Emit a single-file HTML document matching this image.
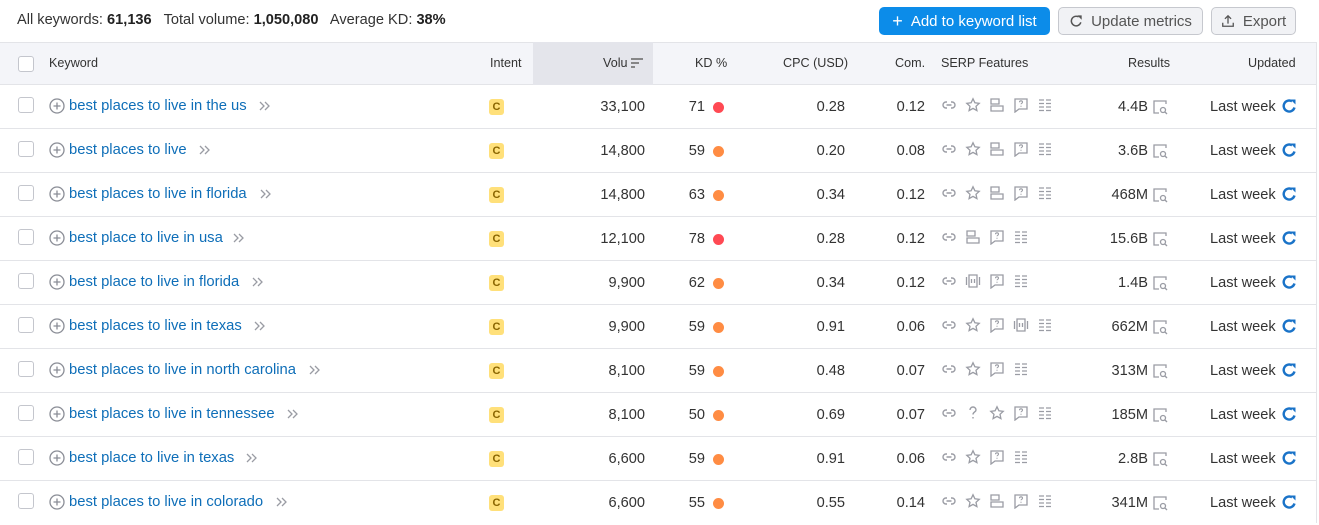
<!DOCTYPE html><html><head><meta charset="utf-8"><style>
*{margin:0;padding:0;box-sizing:border-box}
body{width:1319px;height:523px;overflow:hidden;background:#fff;font-family:"Liberation Sans",Arial,sans-serif;color:#333;font-size:14.6px;position:relative}
.abs{position:absolute}
.top{left:17px;top:12px;font-size:14.6px;color:#333}
.top b{color:#222}
.btn{position:absolute;top:7px;height:28px;border-radius:5px;font-size:15px;display:flex;align-items:center;justify-content:center;gap:8px}
.hdr{position:absolute;left:0;top:42px;width:1317px;height:43px;background:#f4f5f9;border-top:1px solid #e3e4e8;border-bottom:1px solid #e3e4e8}
.vol{position:absolute;left:533px;top:42px;width:120px;height:43px;background:#e4e5eb}
.h{position:absolute;top:56px;font-size:12.6px;color:#333}
.row{position:absolute;left:0;width:1317px;height:44px;border-bottom:1px solid #e3e4e8}
.row span,.row svg{position:absolute}
.cb{left:18px;top:12px;width:16px;height:16px;border:1px solid #c4c6cd;border-radius:3px;background:#fff}
.kw{left:69px;top:13px;color:#0e6eb8;font-size:14.8px;white-space:nowrap}
.ci{left:489px;top:14px;width:15px;height:16px;background:#ffe07a;border-radius:3px;font-size:11px;font-weight:bold;color:#8a6500;text-align:center;line-height:16px}
.r{text-align:right;top:14px}
.dot{width:11px;height:11px;border-radius:50%;top:17px;left:713px}
.lw{left:1210px;top:14px;color:#333}
</style></head><body>
<svg width="0" height="0" style="position:absolute"><defs>
<symbol id="plus" viewBox="0 0 16 16"><circle cx="8" cy="8" r="7" fill="none" stroke="#8a8d96" stroke-width="1.3"/><path d="M8 4.5v7M4.5 8h7" stroke="#8a8d96" stroke-width="1.3"/></symbol>
<symbol id="chev" viewBox="0 0 14 14"><path d="M2 3l4 4-4 4M7 3l4 4-4 4" fill="none" stroke="#9a9ca4" stroke-width="1.3"/></symbol>
<symbol id="link" viewBox="0 0 16 16"><path d="M6 5H5a3 3 0 000 6h1M10 5h1a3 3 0 010 6h-1M5.5 8h5" fill="none" stroke="#9a9ca4" stroke-width="1.4"/></symbol>
<symbol id="star" viewBox="0 0 16 16"><path d="M8 1.8l1.9 4 4.3.5-3.2 3 .9 4.3L8 11.4l-3.9 2.2.9-4.3-3.2-3 4.3-.5z" fill="none" stroke="#9a9ca4" stroke-width="1.3"/></symbol>
<symbol id="site" viewBox="0 0 16 16"><path d="M2 2h8v5H2zM2 9h12v5H2z" fill="none" stroke="#9a9ca4" stroke-width="1.3"/></symbol>
<symbol id="faq" viewBox="0 0 16 16"><path d="M2 2h12v10H6l-4 3z" fill="none" stroke="#9a9ca4" stroke-width="1.3"/><path d="M6.5 5.3a1.5 1.5 0 113 0c0 1-1.5 1-1.5 2M8 8.8v1" fill="none" stroke="#9a9ca4" stroke-width="1.1"/></symbol>
<symbol id="list" viewBox="0 0 16 16"><path d="M2 3h5M9 3h5M2 6.5h5M9 6.5h5M2 10h5M9 10h5M2 13.5h5M9 13.5h5" stroke="#9a9ca4" stroke-width="1.3"/></symbol>
<symbol id="vid" viewBox="0 0 16 16"><path d="M4 2h8v12H4zM1.5 4v8M14.5 4v8" fill="none" stroke="#9a9ca4" stroke-width="1.3"/><path d="M6.5 6v4M9.5 6v4" stroke="#9a9ca4" stroke-width="1.3"/></symbol>
<symbol id="q" viewBox="0 0 16 16"><path d="M5 5a3 3 0 116 0c0 2-3 2-3 4.5M8 12v1.5" fill="none" stroke="#9a9ca4" stroke-width="1.4"/></symbol>
<symbol id="res" viewBox="0 0 16 16"><path d="M14 5V2H2v12h5" fill="none" stroke="#9a9ca4" stroke-width="1.3"/><circle cx="11" cy="11" r="2.5" fill="none" stroke="#9a9ca4" stroke-width="1.3"/><path d="M13 13l2 2" stroke="#9a9ca4" stroke-width="1.3"/></symbol>
<symbol id="ref" viewBox="0 0 16 16"><path d="M11 3.3A5.5 5.5 0 1013.5 9.5" fill="none" stroke="#1a73c8" stroke-width="2.4"/><path d="M9.5 1.5h5v5z" fill="#1a73c8"/></symbol>
</defs></svg>
<div class="abs top">All keywords: <b>61,136</b>&nbsp;&nbsp; Total volume: <b>1,050,080</b>&nbsp;&nbsp; Average KD: <b>38%</b></div>
<div class="btn" style="left:879px;width:171px;background:#0c8ce9;color:#fff"><span style="font-size:18px">+</span>Add to keyword list</div>
<div class="btn" style="left:1058px;width:145px;background:#f1f2f5;border:1px solid #c6c8ce;color:#555"><svg width="14" height="14" viewBox="0 0 16 16"><path d="M11 3.3A5.5 5.5 0 1013.5 9.5" fill="none" stroke="#555" stroke-width="1.7"/><path d="M9.5 1.5h5v5z" fill="#555"/></svg>Update metrics</div>
<div class="btn" style="left:1211px;width:85px;background:#f1f2f5;border:1px solid #c6c8ce;color:#555"><svg width="14" height="14" viewBox="0 0 16 16"><path d="M8 11V2M4.5 5.5L8 2l3.5 3.5M2 10v4h12v-4" fill="none" stroke="#555" stroke-width="1.5"/></svg>Export</div>
<div class="hdr"></div><div class="vol"></div>
<div class="abs" style="left:18px;top:56px;width:16px;height:16px;border:1px solid #c4c6cd;border-radius:3px;background:#fff"></div>
<span class="h" style="left:49px">Keyword</span>
<span class="h" style="left:490px">Intent</span>
<span class="h" style="left:603px">Volu</span>
<svg class="abs" style="left:630px;top:57px" width="14" height="12"><path d="M1 2h12M1 6h8M1 10h4" stroke="#666" stroke-width="1.5"/></svg>
<span class="h" style="left:695px">KD %</span>
<span class="h" style="left:783px">CPC (USD)</span>
<span class="h" style="left:895px">Com.</span>
<span class="h" style="left:941px">SERP Features</span>
<span class="h" style="left:1128px">Results</span>
<span class="h" style="left:1248px">Updated</span>
<div style="position:absolute;left:1316px;top:42px;width:1px;height:481px;background:#e3e4e8"></div>

<div class="row" style="top:85px"><span class="cb"></span><svg style="left:49px;top:13px" width="16" height="16"><use href="#plus"/></svg><span class="kw">best places to live in the us</span><svg style="left:258px;top:14px" width="14" height="14"><use href="#chev"/></svg><span class="ci">C</span><span class="r" style="right:672px">33,100</span><span class="r" style="right:612px">71</span><span class="dot" style="background:#ff4953"></span><span class="r" style="right:472px">0.28</span><span class="r" style="right:392px">0.12</span><svg style="left:941px;top:12px" width="16" height="16"><use href="#link"/></svg><svg style="left:965px;top:12px" width="16" height="16"><use href="#star"/></svg><svg style="left:989px;top:12px" width="16" height="16"><use href="#site"/></svg><svg style="left:1013px;top:12px" width="16" height="16"><use href="#faq"/></svg><svg style="left:1037px;top:12px" width="16" height="16"><use href="#list"/></svg><span class="r" style="right:169px">4.4B</span><svg style="left:1152px;top:14px" width="16" height="16"><use href="#res"/></svg><span class="lw">Last week</span><svg style="left:1281px;top:13px" width="16" height="16"><use href="#ref"/></svg></div>

<div class="row" style="top:129px"><span class="cb"></span><svg style="left:49px;top:13px" width="16" height="16"><use href="#plus"/></svg><span class="kw">best places to live</span><svg style="left:198px;top:14px" width="14" height="14"><use href="#chev"/></svg><span class="ci">C</span><span class="r" style="right:672px">14,800</span><span class="r" style="right:612px">59</span><span class="dot" style="background:#ff8c43"></span><span class="r" style="right:472px">0.20</span><span class="r" style="right:392px">0.08</span><svg style="left:941px;top:12px" width="16" height="16"><use href="#link"/></svg><svg style="left:965px;top:12px" width="16" height="16"><use href="#star"/></svg><svg style="left:989px;top:12px" width="16" height="16"><use href="#site"/></svg><svg style="left:1013px;top:12px" width="16" height="16"><use href="#faq"/></svg><svg style="left:1037px;top:12px" width="16" height="16"><use href="#list"/></svg><span class="r" style="right:169px">3.6B</span><svg style="left:1152px;top:14px" width="16" height="16"><use href="#res"/></svg><span class="lw">Last week</span><svg style="left:1281px;top:13px" width="16" height="16"><use href="#ref"/></svg></div>

<div class="row" style="top:173px"><span class="cb"></span><svg style="left:49px;top:13px" width="16" height="16"><use href="#plus"/></svg><span class="kw">best places to live in florida</span><svg style="left:259px;top:14px" width="14" height="14"><use href="#chev"/></svg><span class="ci">C</span><span class="r" style="right:672px">14,800</span><span class="r" style="right:612px">63</span><span class="dot" style="background:#ff8c43"></span><span class="r" style="right:472px">0.34</span><span class="r" style="right:392px">0.12</span><svg style="left:941px;top:12px" width="16" height="16"><use href="#link"/></svg><svg style="left:965px;top:12px" width="16" height="16"><use href="#star"/></svg><svg style="left:989px;top:12px" width="16" height="16"><use href="#site"/></svg><svg style="left:1013px;top:12px" width="16" height="16"><use href="#faq"/></svg><svg style="left:1037px;top:12px" width="16" height="16"><use href="#list"/></svg><span class="r" style="right:169px">468M</span><svg style="left:1152px;top:14px" width="16" height="16"><use href="#res"/></svg><span class="lw">Last week</span><svg style="left:1281px;top:13px" width="16" height="16"><use href="#ref"/></svg></div>

<div class="row" style="top:217px"><span class="cb"></span><svg style="left:49px;top:13px" width="16" height="16"><use href="#plus"/></svg><span class="kw">best place to live in usa</span><svg style="left:232px;top:14px" width="14" height="14"><use href="#chev"/></svg><span class="ci">C</span><span class="r" style="right:672px">12,100</span><span class="r" style="right:612px">78</span><span class="dot" style="background:#ff4953"></span><span class="r" style="right:472px">0.28</span><span class="r" style="right:392px">0.12</span><svg style="left:941px;top:12px" width="16" height="16"><use href="#link"/></svg><svg style="left:965px;top:12px" width="16" height="16"><use href="#site"/></svg><svg style="left:989px;top:12px" width="16" height="16"><use href="#faq"/></svg><svg style="left:1013px;top:12px" width="16" height="16"><use href="#list"/></svg><span class="r" style="right:169px">15.6B</span><svg style="left:1152px;top:14px" width="16" height="16"><use href="#res"/></svg><span class="lw">Last week</span><svg style="left:1281px;top:13px" width="16" height="16"><use href="#ref"/></svg></div>

<div class="row" style="top:261px"><span class="cb"></span><svg style="left:49px;top:13px" width="16" height="16"><use href="#plus"/></svg><span class="kw">best place to live in florida</span><svg style="left:251px;top:14px" width="14" height="14"><use href="#chev"/></svg><span class="ci">C</span><span class="r" style="right:672px">9,900</span><span class="r" style="right:612px">62</span><span class="dot" style="background:#ff8c43"></span><span class="r" style="right:472px">0.34</span><span class="r" style="right:392px">0.12</span><svg style="left:941px;top:12px" width="16" height="16"><use href="#link"/></svg><svg style="left:965px;top:12px" width="16" height="16"><use href="#vid"/></svg><svg style="left:989px;top:12px" width="16" height="16"><use href="#faq"/></svg><svg style="left:1013px;top:12px" width="16" height="16"><use href="#list"/></svg><span class="r" style="right:169px">1.4B</span><svg style="left:1152px;top:14px" width="16" height="16"><use href="#res"/></svg><span class="lw">Last week</span><svg style="left:1281px;top:13px" width="16" height="16"><use href="#ref"/></svg></div>

<div class="row" style="top:305px"><span class="cb"></span><svg style="left:49px;top:13px" width="16" height="16"><use href="#plus"/></svg><span class="kw">best places to live in texas</span><svg style="left:253px;top:14px" width="14" height="14"><use href="#chev"/></svg><span class="ci">C</span><span class="r" style="right:672px">9,900</span><span class="r" style="right:612px">59</span><span class="dot" style="background:#ff8c43"></span><span class="r" style="right:472px">0.91</span><span class="r" style="right:392px">0.06</span><svg style="left:941px;top:12px" width="16" height="16"><use href="#link"/></svg><svg style="left:965px;top:12px" width="16" height="16"><use href="#star"/></svg><svg style="left:989px;top:12px" width="16" height="16"><use href="#faq"/></svg><svg style="left:1013px;top:12px" width="16" height="16"><use href="#vid"/></svg><svg style="left:1037px;top:12px" width="16" height="16"><use href="#list"/></svg><span class="r" style="right:169px">662M</span><svg style="left:1152px;top:14px" width="16" height="16"><use href="#res"/></svg><span class="lw">Last week</span><svg style="left:1281px;top:13px" width="16" height="16"><use href="#ref"/></svg></div>

<div class="row" style="top:349px"><span class="cb"></span><svg style="left:49px;top:13px" width="16" height="16"><use href="#plus"/></svg><span class="kw">best places to live in north carolina</span><svg style="left:308px;top:14px" width="14" height="14"><use href="#chev"/></svg><span class="ci">C</span><span class="r" style="right:672px">8,100</span><span class="r" style="right:612px">59</span><span class="dot" style="background:#ff8c43"></span><span class="r" style="right:472px">0.48</span><span class="r" style="right:392px">0.07</span><svg style="left:941px;top:12px" width="16" height="16"><use href="#link"/></svg><svg style="left:965px;top:12px" width="16" height="16"><use href="#star"/></svg><svg style="left:989px;top:12px" width="16" height="16"><use href="#faq"/></svg><svg style="left:1013px;top:12px" width="16" height="16"><use href="#list"/></svg><span class="r" style="right:169px">313M</span><svg style="left:1152px;top:14px" width="16" height="16"><use href="#res"/></svg><span class="lw">Last week</span><svg style="left:1281px;top:13px" width="16" height="16"><use href="#ref"/></svg></div>

<div class="row" style="top:393px"><span class="cb"></span><svg style="left:49px;top:13px" width="16" height="16"><use href="#plus"/></svg><span class="kw">best places to live in tennessee</span><svg style="left:286px;top:14px" width="14" height="14"><use href="#chev"/></svg><span class="ci">C</span><span class="r" style="right:672px">8,100</span><span class="r" style="right:612px">50</span><span class="dot" style="background:#ff8c43"></span><span class="r" style="right:472px">0.69</span><span class="r" style="right:392px">0.07</span><svg style="left:941px;top:12px" width="16" height="16"><use href="#link"/></svg><svg style="left:965px;top:12px" width="16" height="16"><use href="#q"/></svg><svg style="left:989px;top:12px" width="16" height="16"><use href="#star"/></svg><svg style="left:1013px;top:12px" width="16" height="16"><use href="#faq"/></svg><svg style="left:1037px;top:12px" width="16" height="16"><use href="#list"/></svg><span class="r" style="right:169px">185M</span><svg style="left:1152px;top:14px" width="16" height="16"><use href="#res"/></svg><span class="lw">Last week</span><svg style="left:1281px;top:13px" width="16" height="16"><use href="#ref"/></svg></div>

<div class="row" style="top:437px"><span class="cb"></span><svg style="left:49px;top:13px" width="16" height="16"><use href="#plus"/></svg><span class="kw">best place to live in texas</span><svg style="left:245px;top:14px" width="14" height="14"><use href="#chev"/></svg><span class="ci">C</span><span class="r" style="right:672px">6,600</span><span class="r" style="right:612px">59</span><span class="dot" style="background:#ff8c43"></span><span class="r" style="right:472px">0.91</span><span class="r" style="right:392px">0.06</span><svg style="left:941px;top:12px" width="16" height="16"><use href="#link"/></svg><svg style="left:965px;top:12px" width="16" height="16"><use href="#star"/></svg><svg style="left:989px;top:12px" width="16" height="16"><use href="#faq"/></svg><svg style="left:1013px;top:12px" width="16" height="16"><use href="#list"/></svg><span class="r" style="right:169px">2.8B</span><svg style="left:1152px;top:14px" width="16" height="16"><use href="#res"/></svg><span class="lw">Last week</span><svg style="left:1281px;top:13px" width="16" height="16"><use href="#ref"/></svg></div>

<div class="row" style="top:481px;border-bottom:none"><span class="cb"></span><svg style="left:49px;top:13px" width="16" height="16"><use href="#plus"/></svg><span class="kw">best places to live in colorado</span><svg style="left:275px;top:14px" width="14" height="14"><use href="#chev"/></svg><span class="ci">C</span><span class="r" style="right:672px">6,600</span><span class="r" style="right:612px">55</span><span class="dot" style="background:#ff8c43"></span><span class="r" style="right:472px">0.55</span><span class="r" style="right:392px">0.14</span><svg style="left:941px;top:12px" width="16" height="16"><use href="#link"/></svg><svg style="left:965px;top:12px" width="16" height="16"><use href="#star"/></svg><svg style="left:989px;top:12px" width="16" height="16"><use href="#site"/></svg><svg style="left:1013px;top:12px" width="16" height="16"><use href="#faq"/></svg><svg style="left:1037px;top:12px" width="16" height="16"><use href="#list"/></svg><span class="r" style="right:169px">341M</span><svg style="left:1152px;top:14px" width="16" height="16"><use href="#res"/></svg><span class="lw">Last week</span><svg style="left:1281px;top:13px" width="16" height="16"><use href="#ref"/></svg></div>
</body></html>
